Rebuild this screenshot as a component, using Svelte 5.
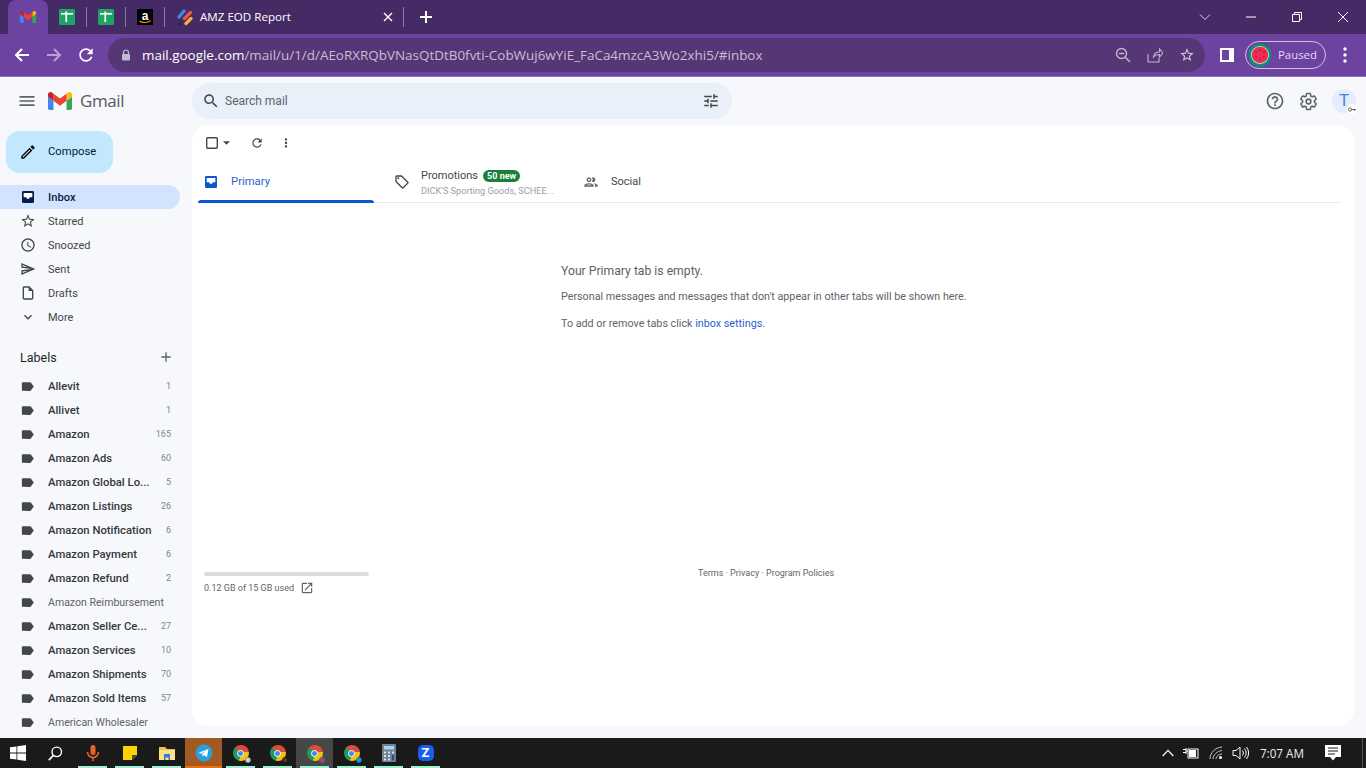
<script lang="ts">
  const nav = [
    { name: "Starred", d: "M22 9.24l-7.19-.62L12 2 9.19 8.63 2 9.24l5.46 4.73L5.82 21 12 17.27 18.18 21l-1.63-7.03L22 9.24zM12 15.4l-3.76 2.27 1-4.28-3.32-2.88 4.38-.38L12 6.1l1.71 4.04 4.38.38-3.32 2.88 1 4.28L12 15.4z" },
    { name: "Snoozed", d: "M11.99 2C6.47 2 2 6.48 2 12s4.47 10 9.99 10C17.52 22 22 17.52 22 12S17.52 2 11.99 2zM12 20c-4.42 0-8-3.58-8-8s3.58-8 8-8 8 3.58 8 8-3.58 8-8 8zm.5-13H11v6l5.25 3.15.75-1.23-4.5-2.67z" },
    { name: "Sent", d: "M4.01 6.03l7.51 3.22-7.52-1 .01-2.22m7.5 8.72L4 17.97v-2.22l7.51-1M2.01 3L2 10l15 2-15 2 .01 7L23 12 2.01 3z" },
    { name: "Drafts", d: "M14 2H6c-1.1 0-1.99.9-1.99 2L4 20c0 1.1.89 2 1.99 2H18c1.1 0 2-.9 2-2V8l-6-6zM6 20V4h7v5h5v11H6z" },
    { name: "More", d: "M7.41 8.59L12 13.17l4.59-4.58L18 10l-6 6-6-6z" }
  ];

  const labels = [
    { name: "Allevit", count: "1", bold: true },
    { name: "Allivet", count: "1", bold: true },
    { name: "Amazon", count: "165", bold: true },
    { name: "Amazon Ads", count: "60", bold: true },
    { name: "Amazon Global Lo...", count: "5", bold: true },
    { name: "Amazon Listings", count: "26", bold: true },
    { name: "Amazon Notification", count: "6", bold: true },
    { name: "Amazon Payment", count: "6", bold: true },
    { name: "Amazon Refund", count: "2", bold: true },
    { name: "Amazon Reimbursement", count: "", bold: false },
    { name: "Amazon Seller Ce...", count: "27", bold: true },
    { name: "Amazon Services", count: "10", bold: true },
    { name: "Amazon Shipments", count: "70", bold: true },
    { name: "Amazon Sold Items", count: "57", bold: true },
    { name: "American Wholesaler", count: "", bold: false }
  ];

  const labelPath = "M17.63 5.84C17.27 5.33 16.67 5 16 5L5 5.01C3.9 5.01 3 5.9 3 7v10c0 1.1.9 1.99 2 1.99L16 19c.67 0 1.27-.33 1.63-.84L22 12l-4.37-6.16z";
  const dots = "M12 8c1.1 0 2-.9 2-2s-.9-2-2-2-2 .9-2 2 .9 2 2 2zm0 2c-1.1 0-2 .9-2 2s.9 2 2 2 2-.9 2-2-.9-2-2-2zm0 6c-1.1 0-2 .9-2 2s.9 2 2 2 2-.9 2-2-.9-2-2-2z";
  // profile badge colours on the four taskbar Chrome windows
  const taskChrome = [
    { fill: "#d5d7da", ring: "#8d9096" },
    { fill: "#5b3a1e", ring: "#1c1c1c" },
    { fill: "#e8265e", ring: "#0c8f78" },
    { fill: "#2a8fd8", ring: "#1c6fb0" }
  ];
</script>

{#snippet sheet()}
  <svg width="16" height="16" viewBox="0 0 16 16">
    <rect width="16" height="16" rx="1.5" fill="#1fa463" />
    <rect x="2" y="4" width="12" height="1.6" fill="#fff" />
    <rect x="6.4" y="2.5" width="1.7" height="10.5" fill="#fff" />
  </svg>
{/snippet}

{#snippet gmailM(size)}
  <svg width={size} height={size * 0.75} viewBox="52 42 88 66">
    <path fill="#4285f4" d="M58 108h14V74L52 59v43c0 3.32 2.69 6 6 6" />
    <path fill="#34a853" d="M120 108h14c3.32 0 6-2.69 6-6V59l-20 15" />
    <path fill="#fbbc04" d="M120 48v26l20-15v-8c0-7.42-8.47-11.65-14.4-7.2" />
    <path fill="#ea4335" d="M72 74V48l24 18 24-18v26L96 92" />
    <path fill="#c5221f" d="M52 51v8l20 15V48l-5.6-4.2c-5.94-4.45-14.4-.22-14.4 7.2" />
  </svg>
{/snippet}

<div class="screen">
  <!-- browser chrome -->
  <div class="tabstrip">
    <div class="tab active">{@render gmailM(16)}</div>
    <div class="tab first">{@render sheet()}</div>
    <i class="sep"></i>
    <div class="tab plain">{@render sheet()}</div>
    <i class="sep"></i>
    <div class="tab plain">
      <svg width="16" height="16" viewBox="0 0 16 16">
        <rect width="16" height="16" fill="#000" />
        <text x="8" y="11" class="amz-a">a</text>
        <path d="M2.5 12c3 2 8 2 11-.2" fill="none" stroke="#f90" stroke-width="1.2" />
      </svg>
    </div>
    <i class="sep"></i>
    <div class="tab wide">
      <svg width="17" height="17" viewBox="0 0 17 17">
        <path d="M3 8l5-6" stroke="#3b8bea" stroke-width="3.2" stroke-linecap="round" />
        <path d="M8.5 9.5l6-6" stroke="#ea5a3c" stroke-width="3.2" stroke-linecap="round" />
        <path d="M10 14.5l5-5" stroke="#f6b13c" stroke-width="3.2" stroke-linecap="round" />
        <path d="M1 16l3.4-3.4 1.6 3.4z" fill="#1d2a5b" />
      </svg>
      <span class="tab-title">AMZ EOD Report</span>
      <svg class="tab-close" width="10" height="10" viewBox="0 0 10 10">
        <path d="M1 1l8 8M9 1l-8 8" stroke="#fff" stroke-width="1.4" />
      </svg>
    </div>
    <i class="sep"></i>
    <svg class="newtab" width="14" height="14" viewBox="0 0 14 14">
      <path d="M7 1v12M1 7h12" stroke="#fff" stroke-width="2" />
    </svg>
    <div class="winctl">
      <svg width="12" height="12" viewBox="0 0 12 12"><path d="M1 3.5l5 5 5-5" fill="none" stroke="#d8d0e4" /></svg>
      <svg width="12" height="12" viewBox="0 0 12 12"><path d="M1 6h10" stroke="#fff" /></svg>
      <svg width="12" height="12" viewBox="0 0 12 12"><path d="M1.5 3.5h7v7h-7zM3.5 3.5v-2h7v7h-2" fill="none" stroke="#fff" /></svg>
      <svg width="12" height="12" viewBox="0 0 12 12"><path d="M1 1l10 10M11 1L1 11" stroke="#fff" /></svg>
    </div>
  </div>

  <div class="toolbar">
    <svg class="nav-btn" width="16" height="16" viewBox="0 0 16 16"><path d="M15 8H2M8 2L2 8l6 6" fill="none" stroke="#fff" stroke-width="2" /></svg>
    <svg class="nav-btn" width="16" height="16" viewBox="0 0 16 16"><path d="M1 8h13M8 2l6 6-6 6" fill="none" stroke="#b7a2d2" stroke-width="2" /></svg>
    <svg class="reload" width="20" height="20" viewBox="0 0 24 24"><path d="M17.65 6.35C16.2 4.9 14.21 4 12 4c-4.42 0-7.99 3.58-7.99 8s3.57 8 7.99 8c3.73 0 6.84-2.55 7.73-6h-2.08c-.82 2.33-3.04 4-5.65 4-3.31 0-6-2.69-6-6s2.69-6 6-6c1.66 0 3.14.69 4.22 1.78L13 11h7V4l-2.35 2.35z" fill="#fff" /></svg>
    <div class="omnibox">
      <svg width="10" height="12" viewBox="0 0 10 12">
        <path d="M2.5 5V3.5a2.5 2.5 0 0 1 5 0V5" fill="none" stroke="#c4b6d6" stroke-width="1.2" />
        <rect x="1" y="5" width="8" height="6.5" rx="1" fill="#c4b6d6" />
      </svg>
      <span class="url"><b>mail.google.com</b>/mail/u/1/d/AEoRXRQbVNasQtDtB0fvti-CobWuj6wYiE_FaCa4mzcA3Wo2xhi5/#inbox</span>
      <div class="omni-icons">
        <svg width="16" height="16" viewBox="0 0 16 16"><circle cx="6.5" cy="6.5" r="5" fill="none" stroke="#c4b6d6" stroke-width="1.4" /><path d="M10.2 10.2L15 15M4 6.5h5" stroke="#c4b6d6" stroke-width="1.4" /></svg>
        <svg width="16" height="16" viewBox="0 0 16 16"><path d="M1 7v8h11v-4M6.5 10c.5-3 3-5 6-5V2L16 6l-3.5 4V7.5c-2.5 0-4.5.8-6 2.5z" fill="none" stroke="#c4b6d6" stroke-width="1.1" /></svg>
        <svg width="16" height="16" viewBox="0 0 24 24"><path d="M22 9.24l-7.19-.62L12 2 9.19 8.63 2 9.24l5.46 4.73L5.82 21 12 17.27 18.18 21l-1.63-7.03L22 9.24zM12 15.4l-3.76 2.27 1-4.28-3.32-2.88 4.38-.38L12 6.1l1.71 4.04 4.38.38-3.32 2.88 1 4.28L12 15.4z" fill="#d6cbe3" /></svg>
      </div>
    </div>
    <svg class="sidepanel" width="14" height="14" viewBox="0 0 14 14"><path d="M0 0h14v14H0z" fill="#fff" /><path d="M2 2h7v10H2z" fill="#6c43a0" /></svg>
    <div class="profile">
      <svg width="24" height="24" viewBox="0 0 24 24">
        <circle cx="12" cy="12" r="11.5" fill="#0c8f78" />
        <circle cx="12" cy="12" r="9" fill="#d9f0d0" />
        <circle cx="12" cy="12" r="8.3" fill="#ef2b58" />
        <circle cx="8" cy="9" r=".7" fill="#7a1030" /><circle cx="12" cy="7" r=".7" fill="#7a1030" /><circle cx="16" cy="9" r=".7" fill="#7a1030" />
        <circle cx="8" cy="14" r=".7" fill="#7a1030" /><circle cx="12" cy="16" r=".7" fill="#7a1030" /><circle cx="16" cy="14" r=".7" fill="#7a1030" />
      </svg>
      <span>Paused</span>
    </div>
    <svg class="menu-dots" width="16" height="20" viewBox="0 0 16 20">
      <circle cx="8" cy="4" r="1.7" fill="#fff" /><circle cx="8" cy="10" r="1.7" fill="#fff" /><circle cx="8" cy="16" r="1.7" fill="#fff" />
    </svg>
  </div>

  <!-- gmail -->
  <div class="gmail">
    <header class="g-head">
      <div class="brand">
        <svg width="20" height="20" viewBox="0 0 24 24"><path d="M3 18h18v-2H3v2zm0-5h18v-2H3v2zm0-7v2h18V6H3z" fill="#5f6368" /></svg>
        {@render gmailM(24)}
        <span class="wordmark">Gmail</span>
      </div>
      <div class="search">
        <svg width="18" height="18" viewBox="0 0 24 24"><path d="M15.5 14h-.79l-.28-.27C15.41 12.59 16 11.11 16 9.5 16 5.91 13.09 3 9.5 3S3 5.91 3 9.5 5.91 16 9.5 16c1.61 0 3.09-.59 4.23-1.57l.27.28v.79l5 4.99L20.49 19l-4.99-5zm-6 0C7.01 14 5 11.99 5 9.5S7.01 5 9.5 5 14 7.01 14 9.5 11.99 14 9.5 14z" fill="#444746" /></svg>
        <span>Search mail</span>
        <svg class="tune" width="18" height="18" viewBox="0 0 24 24"><path d="M3 17v2h6v-2H3zM3 5v2h10V5H3zm10 16v-2h8v-2h-8v-2h-2v6h2zM7 9v2H3v2h4v2h2V9H7zm14 4v-2H11v2h10zm-6-4h2V7h4V5h-4V3h-2v6z" fill="#444746" /></svg>
      </div>
      <div class="head-right">
        <svg width="20" height="20" viewBox="0 0 24 24"><path d="M11 18h2v-2h-2v2zm1-16C6.48 2 2 6.48 2 12s4.48 10 10 10 10-4.48 10-10S17.52 2 12 2zm0 18c-4.41 0-8-3.59-8-8s3.59-8 8-8 8 3.59 8 8-3.59 8-8 8zm0-14c-2.21 0-4 1.79-4 4h2c0-1.1.9-2 2-2s2 .9 2 2c0 2-3 1.75-3 5h2c0-2.25 3-2.5 3-5 0-2.21-1.79-4-4-4z" fill="#5f6368" /></svg>
        <svg width="19" height="19" viewBox="0 0 24 24"><path d="M19.43 12.98c.04-.32.07-.64.07-.98s-.03-.66-.07-.98l2.11-1.65c.19-.15.24-.42.12-.64l-2-3.46c-.12-.22-.39-.3-.61-.22l-2.49 1c-.52-.4-1.08-.73-1.69-.98l-.38-2.65C14.46 2.18 14.25 2 14 2h-4c-.25 0-.46.18-.49.42l-.38 2.65c-.61.25-1.17.59-1.69.98l-2.49-1c-.23-.09-.49 0-.61.22l-2 3.46c-.13.22-.07.49.12.64l2.11 1.65c-.04.32-.07.65-.07.98s.03.66.07.98l-2.11 1.65c-.19.15-.24.42-.12.64l2 3.46c.12.22.39.3.61.22l2.49-1c.52.4 1.08.73 1.69.98l.38 2.65c.03.24.24.42.49.42h4c.25 0 .46-.18.49-.42l.38-2.65c.61-.25 1.17-.59 1.69-.98l2.49 1c.23.09.49 0 .61-.22l2-3.46c.12-.22.07-.49-.12-.64l-2.11-1.65z" fill="none" stroke="#5f6368" stroke-width="1.9" /><circle cx="12" cy="12" r="3" fill="none" stroke="#5f6368" stroke-width="1.9" /></svg>
        <div class="avatar">
          T
          <span class="badge">
            <svg width="8" height="5" viewBox="0 0 8 5"><circle cx="2" cy="2.5" r="1.6" fill="none" stroke="#5f6368" /><path d="M3.5 2.5H8M6.5 2.5v1.5" stroke="#5f6368" /></svg>
          </span>
        </div>
      </div>
    </header>

    <div class="g-body">
      <aside class="side">
        <button class="compose">
          <svg width="18" height="18" viewBox="0 0 24 24"><path d="M14.06 9.02l.92.92L5.92 19H5v-.92l9.06-9.06M17.66 3c-.25 0-.51.1-.7.29l-1.83 1.83 3.75 3.75 1.83-1.83c.39-.39.39-1.02 0-1.41l-2.34-2.34c-.2-.2-.45-.29-.71-.29zm-3.6 3.19L3 17.25V21h3.75L17.81 9.94l-3.75-3.75z" fill="#111" /></svg>
          <span>Compose</span>
        </button>
        <div class="nav">
          <div class="row current">
            <svg width="16" height="16" viewBox="0 0 24 24"><rect x="3" y="3" width="18" height="18" rx="2" fill="#041e49" /><path d="M5.5 6h13v6.5h-4c0 1.4-1.1 2.5-2.5 2.5s-2.5-1.1-2.5-2.5h-4z" fill="#fff" /></svg>
            <span>Inbox</span>
          </div>
          {#each nav as item}
            <div class="row">
              <svg width="16" height="16" viewBox="0 0 24 24"><path d={item.d} fill="#444746" /></svg>
              <span>{item.name}</span>
            </div>
          {/each}
        </div>
        <div class="labels-head">
          <span>Labels</span>
          <svg width="16" height="16" viewBox="0 0 24 24"><path d="M19 13h-6v6h-2v-6H5v-2h6V5h2v6h6v2z" fill="#5f6368" /></svg>
        </div>
        {#each labels as label}
          <div class="row lab" class:strong={label.bold}>
            <svg width="15" height="15" viewBox="0 0 24 24"><path d={labelPath} fill="#444746" /></svg>
            <span>{label.name}</span>
            <em>{label.count}</em>
          </div>
        {/each}
      </aside>

      <main class="panel">
        <div class="actions">
          <svg width="16" height="16" viewBox="0 0 16 16"><rect x="2.7" y="2.7" width="10.6" height="10.6" rx="1" fill="none" stroke="#444746" stroke-width="1.4" /></svg>
          <svg class="caret" width="7" height="4" viewBox="0 0 8 4"><path d="M0 0h8L4 4z" fill="#444746" /></svg>
          <svg class="refresh" width="14" height="14" viewBox="0 0 24 24"><path d="M17.65 6.35C16.2 4.9 14.21 4 12 4c-4.42 0-7.99 3.58-7.99 8s3.57 8 7.99 8c3.73 0 6.84-2.55 7.73-6h-2.08c-.82 2.33-3.04 4-5.65 4-3.31 0-6-2.69-6-6s2.69-6 6-6c1.66 0 3.14.69 4.22 1.78L13 11h7V4l-2.35 2.35z" fill="#444746" /></svg>
          <svg class="vert" width="14" height="14" viewBox="0 0 24 24"><path d={dots} fill="#444746" /></svg>
        </div>

        <div class="tabs">
          <div class="mail-tab on">
            <svg width="16" height="16" viewBox="0 0 24 24"><rect x="3" y="3" width="18" height="18" rx="2" fill="#0b57d0" /><path d="M5.5 6h13v6.5h-4c0 1.4-1.1 2.5-2.5 2.5s-2.5-1.1-2.5-2.5h-4z" fill="#fff" /></svg>
            <span class="tab-name">Primary</span>
          </div>
          <div class="mail-tab promo-tab">
            <svg width="16" height="16" viewBox="0 0 24 24"><path d="M21.41 11.58l-9-9C12.05 2.22 11.55 2 11 2H4c-1.1 0-2 .9-2 2v7c0 .55.22 1.05.59 1.42l9 9c.36.36.86.58 1.41.58s1.05-.22 1.41-.59l7-7c.37-.36.59-.86.59-1.41s-.23-1.06-.59-1.42zM13 20.01L4 11V4h7v-.01l9 9-7 7.02z" fill="#444746" /><circle cx="6.5" cy="6.5" r="1.5" fill="#444746" /></svg>
            <div class="promo">
              <div class="promo-top"><span class="tab-name small">Promotions</span><b class="pill">50 new</b></div>
              <div class="promo-sub">DICK'S Sporting Goods, SCHEE...</div>
            </div>
          </div>
          <div class="mail-tab">
            <svg width="16" height="16" viewBox="0 0 24 24"><path d="M9 13.75c-2.34 0-7 1.17-7 3.5V19h14v-1.75c0-2.33-4.66-3.5-7-3.5zM4.34 17c.84-.58 2.87-1.25 4.66-1.25s3.82.67 4.66 1.25H4.34zM9 12c1.93 0 3.5-1.57 3.5-3.5S10.93 5 9 5 5.5 6.57 5.5 8.5 7.07 12 9 12zm0-5c.83 0 1.5.67 1.5 1.5S9.83 10 9 10s-1.5-.67-1.5-1.5S8.17 7 9 7zm7.04 6.81c1.16.84 1.96 1.96 1.96 3.44V19h4v-1.75c0-2.02-3.5-3.17-5.96-3.44zM15 12c1.93 0 3.5-1.57 3.5-3.5S16.93 5 15 5c-.54 0-1.04.13-1.5.35.63.89 1 1.98 1 3.15s-.37 2.26-1 3.15c.46.22.96.35 1.5.35z" fill="#5f6368" /></svg>
            <span class="tab-name small">Social</span>
          </div>
        </div>

        <div class="empty">
          <h2>Your Primary tab is empty.</h2>
          <p>Personal messages and messages that don't appear in other tabs will be shown here.</p>
          <p>To add or remove tabs click <a href="#settings">inbox settings</a>.</p>
        </div>

        <div class="foot">
          <div class="storage">
            <div class="bar"></div>
            <div class="used">
              <span>0.12 GB of 15 GB used</span>
              <svg width="14" height="14" viewBox="0 0 24 24"><path d="M19 19H5V5h7V3H5c-1.11 0-2 .9-2 2v14c0 1.1.89 2 2 2h14c1.1 0 2-.9 2-2v-7h-2v7zM14 3v2h3.59l-9.83 9.83 1.41 1.41L19 6.41V10h2V3h-7z" fill="#5f6368" /></svg>
            </div>
          </div>
          <div class="terms">Terms · Privacy · Program Policies</div>
        </div>
      </main>
    </div>
  </div>

  <!-- windows taskbar -->
  <div class="taskbar">
    <svg class="start" width="16" height="16" viewBox="0 0 16 16"><path d="M0 2.3l6.5-.9v6.2H0zM7.3 1.3L16 0v7.6H7.3zM0 8.4h6.5v6.2L0 13.7zM7.3 8.4H16V16l-8.7-1.3z" fill="#fff" /></svg>
    <svg class="lens" width="15" height="15" viewBox="0 0 18 18"><circle cx="10.5" cy="7" r="5.7" fill="none" stroke="#fff" stroke-width="1.7" /><path d="M6.5 11.2L1 17" stroke="#fff" stroke-width="2" /></svg>
    <div class="apps">
      <div class="app running">
        <svg width="16" height="18" viewBox="0 0 16 18"><rect x="5.5" y="1" width="5" height="10" rx="2.5" fill="#e8622c" /><path d="M2.5 8a5.5 5.5 0 0 0 11 0M8 13.5V17" fill="none" stroke="#e8622c" stroke-width="1.6" /></svg>
      </div>
      <div class="app running">
        <svg width="16" height="16" viewBox="0 0 16 16"><path d="M1 1h14v9l-5 5H1z" fill="#ffd200" /><path d="M10 15v-5h5z" fill="#4a4a3a" /></svg>
      </div>
      <div class="app running">
        <svg width="18" height="16" viewBox="0 0 18 16"><path d="M1 2h6l2 2h8v11H1z" fill="#f0c050" /><path d="M1 5h16v10H1z" fill="#ffdf8a" /><path d="M6 9h6v6h-1.5v-2.5h-3V15H6z" fill="#2a7fd0" /></svg>
      </div>
      <div class="app tg">
        <svg width="18" height="18" viewBox="0 0 18 18"><circle cx="9" cy="9" r="8.5" fill="#2aa0da" /><path d="M3.5 8.8l10-3.9-1.6 8.3-3-2.2-1.5 1.5-.3-2.5 4.7-3.7-5.8 3.4z" fill="#fff" /></svg>
      </div>
      {#each taskChrome as badge, i}
        <div class="app running" class:lit={i === 2}>
          <div class="chrome">
            <span class="chrome-dot"></span>
            <span class="chrome-badge" style="background:{badge.fill};border-color:{badge.ring}"></span>
          </div>
        </div>
      {/each}
      <div class="app running">
        <svg width="14" height="18" viewBox="0 0 14 18"><rect width="14" height="18" rx="1" fill="#6f8296" /><rect x="2" y="2" width="10" height="3.5" fill="#a9d3ef" /><path d="M2 7.5h2v2H2zM6 7.5h2v2H6zM10 7.5h2v2h-2zM2 11h2v2H2zM6 11h2v2H6zM2 14.5h2v2H2zM6 14.5h2v2H6z" fill="#dfe6ec" /><rect x="10" y="11" width="2" height="5.5" fill="#2d4f80" /></svg>
      </div>
      <div class="app running"><span class="zoom-z">Z</span></div>
    </div>
    <div class="tray">
      <svg width="12" height="8" viewBox="0 0 12 8"><path d="M.7 7L6 1.3 11.3 7" fill="none" stroke="#fff" stroke-width="1.2" /></svg>
      <svg class="tray-batt" width="16" height="12" viewBox="0 0 16 12"><path d="M0 2.5h3M0 5.5h3M3 1v6M3 4h2" stroke="#fff" stroke-width="1" /><rect x="5" y="2" width="10" height="9" fill="none" stroke="#fff" /><rect x="6" y="3" width="7" height="7" fill="#fff" /></svg>
      <svg class="tray-wifi" width="14" height="14" viewBox="0 0 14 14"><path d="M1 13C1 7 6 1.5 13 1M4 13c0-4 4-8 9-8.500M7 13c0-2.500 3-5 6-5" fill="none" stroke="#c8c8c8" stroke-width="1" /><circle cx="11.5" cy="11.5" r="1.5" fill="#fff" /></svg>
      <svg class="tray-sound" width="17" height="14" viewBox="0 0 17 14"><path d="M1 4.5h3L8 1v12L4 9.5H1z" fill="none" stroke="#fff" /><path d="M10.5 4.5a4 4 0 0 1 0 5M12.5 2.5a7 7 0 0 1 0 9M14.5 1a9.5 9.5 0 0 1 0 12" fill="none" stroke="#fff" /></svg>
      <span class="clock">7:07 AM</span>
      <svg class="notif" width="16" height="16" viewBox="0 0 16 16"><path d="M0 0h16v12h-5l-3 3.5L5 12H0z" fill="#fff" /><path d="M3 3h10M3 6h10M3 9h7" stroke="#1a1a1a" /></svg>
      <i class="desk"></i>
    </div>
  </div>
</div>

<style>
  :global(body) {
    margin: 0;
    background: #f6f8fc;
  }

  .screen {
    width: 1366px;
    height: 768px;
    display: flex;
    flex-direction: column;
    overflow: hidden;
    font-family: Roboto, "Liberation Sans", sans-serif;
    color: #444746;
  }

  svg {
    display: block;
    flex: none;
  }

  /* ── Browser tab strip ─────────────────────────── */
  .tabstrip {
    height: 34px;
    flex: none;
    display: flex;
    align-items: center;
    background: #452b65;
    padding-left: 8px;
    color: #fff;
  }

  .tab {
    width: 39px;
    height: 34px;
    display: flex;
    align-items: center;
    justify-content: center;
  }

  .tab.active {
    width: 40px;
    background: #6c43a0;
    border-radius: 8px 8px 0 0;
  }

  .tab.first {
    width: 38px;
  }

  .tab.plain {
    width: 38px;
  }

  .tab.wide {
    width: 238px;
    justify-content: flex-start;
    padding-left: 11px;
    box-sizing: border-box;
    gap: 7px;
  }

  .tab-title {
    font: 11.6px "Open Sans", sans-serif;
    flex: 1;
    margin-top: -2px;
    white-space: nowrap;
  }

  .tab-close {
    margin-right: 10px;
  }

  .sep {
    width: 1px;
    height: 20px;
    background: #8a7a9e;
    flex: none;
  }

  .newtab {
    margin-left: 15px;
  }

  .winctl {
    margin-left: auto;
    display: flex;
    align-items: center;
    padding-right: 17px;
    gap: 34px;
    height: 30px;
  }

  /* ── Browser toolbar ───────────────────────────── */
  .toolbar {
    height: 42px;
    flex: none;
    display: flex;
    align-items: center;
    background: #6c43a0;
    border-bottom: 1px solid #8e6cb8;
    padding-left: 14px;
  }

  .nav-btn {
    margin-right: 16px;
  }

  .reload {
    margin: 0 12px 0 -2px;
  }

  .omnibox {
    width: 1097px;
    height: 34px;
    box-sizing: border-box;
    display: flex;
    align-items: center;
    background: #563775;
    border-radius: 17px;
    padding: 0 10px 0 13px;
  }

  .url {
    margin-left: 11px;
    font: 13.45px "Open Sans", sans-serif;
    color: #c9bcd9;
    white-space: nowrap;
  }

  .url b {
    font-weight: 400;
    color: #fff;
  }

  .omni-icons {
    margin-left: auto;
    display: flex;
    gap: 16px;
  }

  .sidepanel {
    margin-left: 15px;
  }

  .profile {
    width: 81px;
    height: 28px;
    box-sizing: border-box;
    margin-left: 11px;
    display: flex;
    align-items: center;
    gap: 6px;
    padding-left: 2px;
    border: 1px solid #cfc4e0;
    border-radius: 14px;
    font: 11.4px "Open Sans", sans-serif;
    color: #e3daf0;
  }

  .profile span {
    margin-top: -1px;
  }

  .menu-dots {
    margin-left: 11px;
  }

  /* ── Gmail shell ───────────────────────────────── */
  .gmail {
    flex: 1;
    min-height: 0;
    display: flex;
    flex-direction: column;
    background: #f6f8fc;
  }

  .g-head {
    height: 48px;
    flex: none;
    display: flex;
    align-items: center;
  }

  .brand {
    width: 192px;
    display: flex;
    align-items: center;
    padding-left: 17px;
    box-sizing: border-box;
    gap: 11px;
  }

  .wordmark {
    font: 400 17px "Open Sans", sans-serif;
    letter-spacing: -0.4px;
    color: #55595e;
    margin: -2px 0 0 -3px;
  }

  .search {
    width: 540px;
    height: 36px;
    box-sizing: border-box;
    display: flex;
    align-items: center;
    gap: 5px;
    padding: 0 12px 0 10px;
    background: #e9f0fa;
    border-radius: 18px;
    font-size: 12px;
    color: #5f6368;
  }

  .tune {
    margin-left: auto;
  }

  .head-right {
    margin-left: auto;
    display: flex;
    align-items: center;
    gap: 14px;
    padding-right: 10px;
  }

  .avatar {
    position: relative;
    width: 24px;
    height: 24px;
    border-radius: 50%;
    background: #e3ecfb;
    color: #4a7fe0;
    font: 17px/23px Roboto, sans-serif;
    text-align: center;
  }

  .badge {
    position: absolute;
    right: -1px;
    bottom: -1px;
    width: 10px;
    height: 10px;
    display: flex;
    align-items: center;
    justify-content: center;
    border-radius: 50%;
    background: #fff;
  }

  .g-body {
    flex: 1;
    min-height: 0;
    display: flex;
  }

  /* ── Sidebar ───────────────────────────────────── */
  .side {
    width: 192px;
    flex: none;
    overflow: hidden;
  }

  .compose {
    width: 107px;
    height: 42px;
    margin: 6px 0 12px 6px;
    display: flex;
    align-items: center;
    gap: 11px;
    padding: 0 0 0 13px;
    border: 0;
    border-radius: 14px;
    background: #c2e7ff;
    color: #001d35;
    font: 400 11.3px Roboto, sans-serif;
  }

  .compose span {
    margin-top: -2px;
  }

  .row {
    width: 180px;
    height: 24px;
    box-sizing: border-box;
    display: flex;
    align-items: center;
    padding: 0 9px 0 20px;
    border-radius: 0 12px 12px 0;
    font-size: 11px;
    color: #444746;
    white-space: nowrap;
  }

  .row span {
    margin-left: 12px;
  }

  .lab span {
    margin-left: 13px;
    font-size: 10.55px;
    color: #5f6368;
  }

  .row em {
    margin-left: auto;
    font-style: normal;
    font-size: 9px;
    color: #80868b;
  }

  .current {
    background: #d3e3fd;
    color: #041e49;
    font-weight: 500;
    font-size: 11.2px;
  }

  .lab.strong span {
    font-size: 11.3px;
    font-weight: 500;
    color: #35383c;
  }

  .labels-head {
    width: 180px;
    height: 41px;
    box-sizing: border-box;
    display: flex;
    align-items: center;
    justify-content: space-between;
    padding: 8px 6px 1px 20px;
    margin-top: 4px;
    font-size: 12.5px;
    color: #1f1f1f;
  }

  /* ── Main panel ────────────────────────────────── */
  .panel {
    width: 1162px;
    height: 601px;
    box-sizing: border-box;
    background: #fff;
    border-radius: 16px;
    padding: 0 12px 0 6px;
    overflow: hidden;
  }

  .actions {
    height: 36px;
    display: flex;
    align-items: center;
    padding-left: 6px;
  }

  .caret {
    margin-left: 3px;
  }

  .refresh {
    margin-left: 20px;
  }

  .vert {
    margin-left: 15px;
  }

  .tabs {
    display: flex;
    height: 41px;
    border-bottom: 1px solid #ececec;
  }

  .mail-tab {
    position: relative;
    width: 190px;
    display: flex;
    align-items: center;
    gap: 12px;
    box-sizing: border-box;
    padding-left: 5px;
    font-size: 11px;
    color: #444746;
  }

  .mail-tab.on {
    color: #2a62d0;
  }

  .mail-tab.on::after {
    content: "";
    position: absolute;
    left: 0;
    bottom: -1px;
    width: 176px;
    height: 3px;
    border-radius: 3px 3px 0 0;
    background: #0b57d0;
  }

  .promo-tab {
    padding-left: 6px;
    gap: 11px;
  }

  .tab-name {
    font-weight: 400;
    font-size: 11.3px;
  }

  .tab-name.small {
    font-size: 11px;
  }

  .promo {
    display: flex;
    flex-direction: column;
    gap: 3px;
    margin-top: 2px;
  }

  .promo-top {
    display: flex;
    align-items: center;
    gap: 5px;
  }

  .pill {
    height: 12px;
    padding: 0 4px;
    border-radius: 6px;
    background: #188038;
    color: #fff;
    font: 700 9px/12px Roboto, sans-serif;
  }

  .promo-sub {
    width: 135px;
    font-size: 9.2px;
    color: #9aa0a6;
    white-space: nowrap;
  }

  .empty {
    height: 369px;
    box-sizing: border-box;
    padding: 60px 0 0 363px;
    font-size: 10.75px;
    color: #5f6368;
  }

  .empty h2 {
    margin: 0 0 11px;
    font-size: 12.2px;
    font-weight: 400;
    line-height: 16px;
    color: #5f6368;
  }

  .empty p {
    margin: 0 0 13px;
    line-height: 14px;
  }

  .empty a {
    color: #2a62d0;
    text-decoration: none;
  }

  .foot {
    display: flex;
    padding-left: 6px;
    font-size: 9px;
    color: #5f6368;
  }

  .storage {
    width: 165px;
  }

  .bar {
    height: 4px;
    border-radius: 2px;
    background: #dadce0;
    margin-bottom: 5px;
  }

  .used {
    display: flex;
    align-items: center;
    gap: 6px;
  }

  .terms {
    margin: -4px 0 0 329px;
  }

  /* ── Windows taskbar ───────────────────────────── */
  .taskbar {
    height: 30px;
    flex: none;
    display: flex;
    align-items: center;
    background: #1a1a1a;
    color: #fff;
  }

  .start {
    margin-left: 10px;
  }

  .lens {
    margin-left: 22px;
  }

  .apps {
    margin-left: 11px;
    display: flex;
  }

  .app {
    position: relative;
    width: 37px;
    height: 30px;
    display: flex;
    align-items: center;
    justify-content: center;
  }

  .running::after {
    content: "";
    position: absolute;
    left: 4px;
    right: 4px;
    bottom: 0;
    height: 2px;
    background: #9ff0d0;
  }

  .lit {
    background: #474747;
  }

  .tg {
    background: #a05a22;
    box-shadow: inset 0 -2px 0 #f07010;
  }

  /* Chrome logo: three sweeps, white ring, blue middle, profile badge. */
  .chrome {
    position: relative;
    width: 16px;
    height: 16px;
    display: flex;
    align-items: center;
    justify-content: center;
    border-radius: 50%;
    background: conic-gradient(#dd4b39 0 80deg, #f4c20d 80deg 195deg, #1e9e55 195deg 310deg, #dd4b39 310deg);
  }

  .chrome-dot {
    width: 5px;
    height: 5px;
    border: 1.5px solid #fff;
    border-radius: 50%;
    background: #4285f4;
  }

  .chrome-badge {
    position: absolute;
    right: -2px;
    bottom: -2px;
    width: 4px;
    height: 4px;
    border: 1.5px solid;
    border-radius: 50%;
  }

  .zoom-z {
    width: 16px;
    height: 16px;
    border-radius: 5px;
    background: #1a5cf0;
    color: #fff;
    font: 700 13px/16px Roboto, sans-serif;
    text-align: center;
  }

  .tray {
    margin-left: auto;
    display: flex;
    align-items: center;
    padding-right: 3px;
    height: 30px;
  }

  .tray-batt {
    margin-left: 9px;
  }

  .tray-wifi {
    margin-left: 10px;
  }

  .tray-sound {
    margin-left: 9px;
  }

  .clock {
    margin-left: 11px;
    font: 11.7px "Open Sans", sans-serif;
    color: #eee;
    white-space: nowrap;
  }

  .notif {
    margin-left: 21px;
  }

  .desk {
    width: 1px;
    height: 30px;
    background: #555;
    margin-left: 21px;
  }

  .amz-a {
    font: 700 12px "Liberation Sans", sans-serif;
    fill: #fff;
    text-anchor: middle;
  }
</style>
